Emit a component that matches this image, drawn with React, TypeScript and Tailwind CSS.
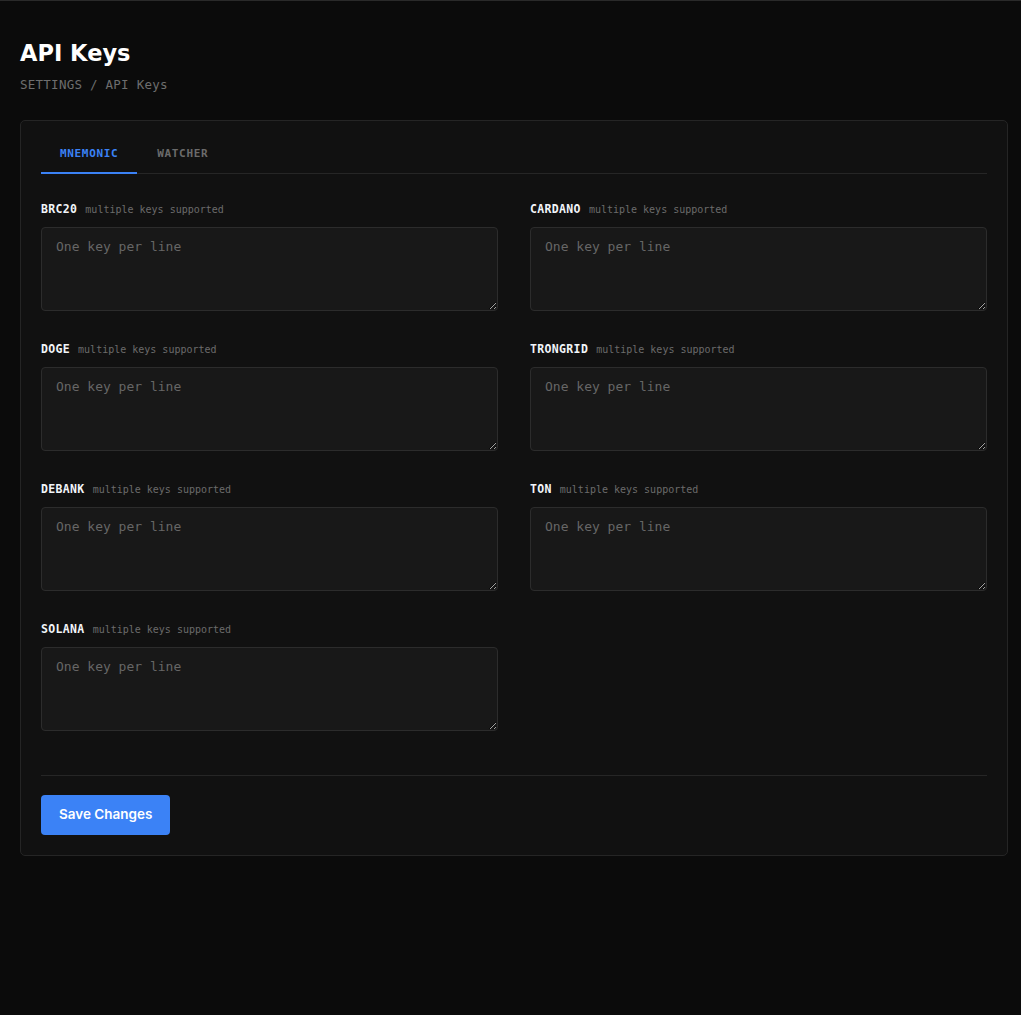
import React from "react";

const mono = { fontFamily: '"DejaVu Sans Mono", "Liberation Mono", monospace' };
const head = { fontFamily: '"DejaVu Sans", "Inter", sans-serif' };
const btn = { fontFamily: 'Inter, "Open Sans", sans-serif' };

const fields = ["BRC20", "CARDANO", "DOGE", "TRONGRID", "DEBANK", "TON", "SOLANA"];

function Field({ name }: { name: string }) {
  return (
    <div className="flex flex-col">
      <div className="flex items-baseline gap-[8px] h-[16px] mb-[10px]" style={mono}>
        <span className="text-[11.5px] font-bold text-[#f1f5f9] tracking-[0.03em]">{name}</span>
        <span className="text-[10px] text-[#6b6b6b]">multiple keys supported</span>
      </div>
      <textarea
        placeholder="One key per line"
        style={mono}
        className="h-[84px] w-full rounded-[4px] border border-[#2c2c2c] bg-[#181818] px-[14px] py-[9px] text-[13px] leading-[20px] text-[#d4d4d4] placeholder:text-[#666666] outline-none"
      />
    </div>
  );
}

export default function App() {
  return (
    <div className="min-h-screen w-full bg-[#0b0b0b] border-t border-[#2a2a2a] pl-5 pr-[13px] pt-[38px]">
      <h1 style={head} className="text-[22.5px] leading-[28px] font-bold text-white tracking-[0em]">
        API Keys
      </h1>
      <div style={mono} className="mt-[8px] text-[12.5px] leading-[20px] text-[#6e6e6e] tracking-[0.02em]">
        SETTINGS / API Keys
      </div>

      <div className="mt-[25px] rounded-[5px] border border-[#252525] bg-[#111111] px-5 pt-[4px] pb-5">
        <div className="flex border-b border-[#262626]" style={mono}>
          <button className="-mb-px border-b-2 border-[#3b82f6] px-[19px] pt-[21px] pb-[9px] text-[11px] font-bold tracking-[0.06em] text-[#3b82f6]">
            MNEMONIC
          </button>
          <button className="-mb-px border-b-2 border-transparent px-[20px] pt-[21px] pb-[9px] text-[11px] font-bold tracking-[0.06em] text-[#6b6b6b]">
            WATCHER
          </button>
        </div>

        <div className="mt-[27px] grid grid-cols-2 gap-x-[32px] gap-y-[30px]">
          {fields.map((f) => (
            <Field key={f} name={f} />
          ))}
        </div>

        <div className="mt-[44px] border-t border-[#262626] pt-[19px]">
          <button
            style={btn}
            className="h-[40px] rounded-[4px] bg-[#3b82f6] px-[18px] text-[13.5px] font-semibold text-white"
          >
            Save Changes
          </button>
        </div>
      </div>
    </div>
  );
}
